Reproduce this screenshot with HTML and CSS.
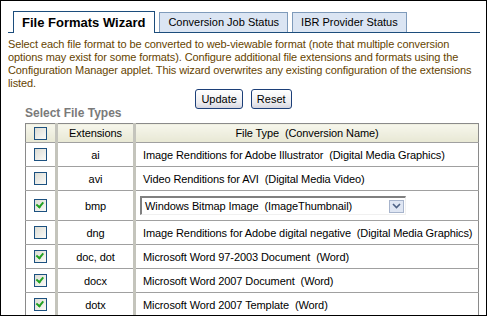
FILE: index.html
```html
<!doctype html>
<html lang="en">
  <head>
    <meta charset="UTF-8" />
    <title>File Formats Wizard</title>
    <link rel="stylesheet" href="styles.css">
  </head>
  <body>
    <div class="frame">
      <div class="tabs">
        <div class="tab active">File Formats Wizard</div>
        <div class="tab">Conversion Job Status</div>
        <div class="tab">IBR Provider Status</div>
      </div>

      <p class="intro">
        Select each file format to be converted to web-viewable format (note that multiple conversion
        options may exist for some formats). Configure additional file extensions and formats using the
        Configuration Manager applet. This wizard overwrites any existing configuration of the extensions
        listed.
      </p>

      <div class="actions">
        <button class="btn">Update</button>
        <button class="btn">Reset</button>
      </div>

      <h3 class="section">Select File Types</h3>

      <table class="types">
        <tr class="head">
          <th class="col-check"><span class="box"></span></th>
          <th class="col-ext">Extensions</th>
          <th class="col-name">File Type&nbsp; (Conversion Name)</th>
        </tr>
        <tr>
          <td class="col-check"><span class="box"></span></td>
          <td class="col-ext">ai</td>
          <td class="col-name">Image Renditions for Adobe Illustrator&nbsp; (Digital Media Graphics)</td>
        </tr>
        <tr>
          <td class="col-check"><span class="box"></span></td>
          <td class="col-ext">avi</td>
          <td class="col-name">Video Renditions for AVI&nbsp; (Digital Media Video)</td>
        </tr>
        <tr class="tall">
          <td class="col-check"><span class="box checked"></span></td>
          <td class="col-ext">bmp</td>
          <td class="col-name">
            <div class="dropdown">
              <span class="value">Windows Bitmap Image&nbsp; (ImageThumbnail)</span>
              <span class="arrow">
                <svg width="9" height="6" viewBox="0 0 9 6"><path d="M1 1 L4.5 4.5 L8 1" fill="none" stroke="#4d6185" stroke-width="1.6"/></svg>
              </span>
            </div>
          </td>
        </tr>
        <tr>
          <td class="col-check"><span class="box"></span></td>
          <td class="col-ext">dng</td>
          <td class="col-name">Image Renditions for Adobe digital negative&nbsp; (Digital Media Graphics)</td>
        </tr>
        <tr>
          <td class="col-check"><span class="box checked"></span></td>
          <td class="col-ext">doc, dot</td>
          <td class="col-name">Microsoft Word 97-2003 Document&nbsp; (Word)</td>
        </tr>
        <tr>
          <td class="col-check"><span class="box checked"></span></td>
          <td class="col-ext">docx</td>
          <td class="col-name">Microsoft Word 2007 Document&nbsp; (Word)</td>
        </tr>
        <tr>
          <td class="col-check"><span class="box checked"></span></td>
          <td class="col-ext">dotx</td>
          <td class="col-name">Microsoft Word 2007 Template&nbsp; (Word)</td>
        </tr>
      </table>
    </div>
  </body>
</html>
```

FILE: styles.css
```css
body {
  margin: 0;
  font-family: 'Liberation Sans', Arial, sans-serif;
  font-size: 11px;
  color: #000;
  background: #fff;
}
.frame {
  width: 487px;
  height: 316px;
  box-sizing: border-box;
  border: 1px solid #000;
  overflow: hidden;
}
.tabs {
  display: flex;
  align-items: flex-end;
  gap: 4px;
  margin: 11px 6px 0 7px;
  padding-left: 5px;
  height: 20px;
  border-bottom: 1px solid #1c4d7c;
}
.tab {
  height: 19px;
  line-height: 19px;
  padding: 0 8px;
  background: #dbe5f3;
  border: 1px solid #7f9bbb;
  border-bottom: none;
  color: #000;
  white-space: nowrap;
}
.tab.active {
  height: 21px;
  line-height: 21px;
  margin-bottom: -1px;
  padding: 0 9px 0 8px;
  background: #fff;
  border-color: #1c4d7c;
  font-size: 13px;
  font-weight: bold;
}
.intro {
  margin: 5px 6px 0 7px;
  line-height: 13px;
  letter-spacing: -0.1px;
  color: #664400;
}
.actions {
  display: flex;
  justify-content: center;
  gap: 8px;
  margin-top: -1px;
}
.btn {
  height: 20px;
  padding: 0 5px;
  font-family: inherit;
  font-size: 11px;
  color: #000;
  border: 1px solid #1c3f78;
  border-radius: 3px;
  background: linear-gradient(#ffffff, #ececf0 70%, #d6d6e0);
}
.section {
  margin: -3px 0 0 24px;
  font-size: 12px;
  line-height: 14px;
  color: #7a7a7a;
}
.types {
  margin: 3px 0 0 24px;
  width: 454px;
  border-collapse: collapse;
  border: 1px solid #8a8a8a;
}
.types th,
.types td {
  height: 23px;
  padding: 0;
  border-bottom: 1px solid #a0a0a0;
  font-weight: normal;
  white-space: nowrap;
  letter-spacing: -0.1px;
}
.types .head th {
  height: 18px;
  background: linear-gradient(#f6f6ec, #e8e8d4);
}
.types .tall td {
  height: 29px;
}
.col-check {
  width: 29px;
  text-align: center;
}
.col-ext {
  width: 75px;
  text-align: center;
  border-left: 3px solid #c4c4bc;
}
.col-name {
  text-align: left;
  border-left: 3px solid #c4c4bc;
}
.types td.col-name {
  padding-left: 7px;
}
.types th.col-name {
  text-align: center;
}
.box {
  display: inline-block;
  position: relative;
  vertical-align: middle;
  width: 11px;
  height: 11px;
  border: 1px solid #1c5180;
  background: linear-gradient(135deg, #dcdcd4, #fbfbf8);
}
.box.checked::after {
  content: '';
  position: absolute;
  left: 2px;
  top: 2px;
  width: 5px;
  height: 3px;
  border-left: 2px solid #21a121;
  border-bottom: 2px solid #21a121;
  transform: rotate(-50deg);
  transform-origin: 40% 60%;
}
.dropdown {
  display: flex;
  align-items: center;
  justify-content: space-between;
  width: 266px;
  height: 19px;
  margin-left: -3px;
  box-sizing: border-box;
  border-top: 2px solid #808080;
  border-left: 2px solid #808080;
  border-right: 1px solid #f0f0f0;
  border-bottom: 1px solid #f0f0f0;
  background: #fff;
}
.dropdown .value {
  padding-left: 3px;
}
.arrow {
  display: flex;
  align-items: center;
  justify-content: center;
  width: 13px;
  height: 11px;
  margin-right: 1px;
  border: 1px solid #a7b4cc;
  background: #dfe6f3;
}
```
